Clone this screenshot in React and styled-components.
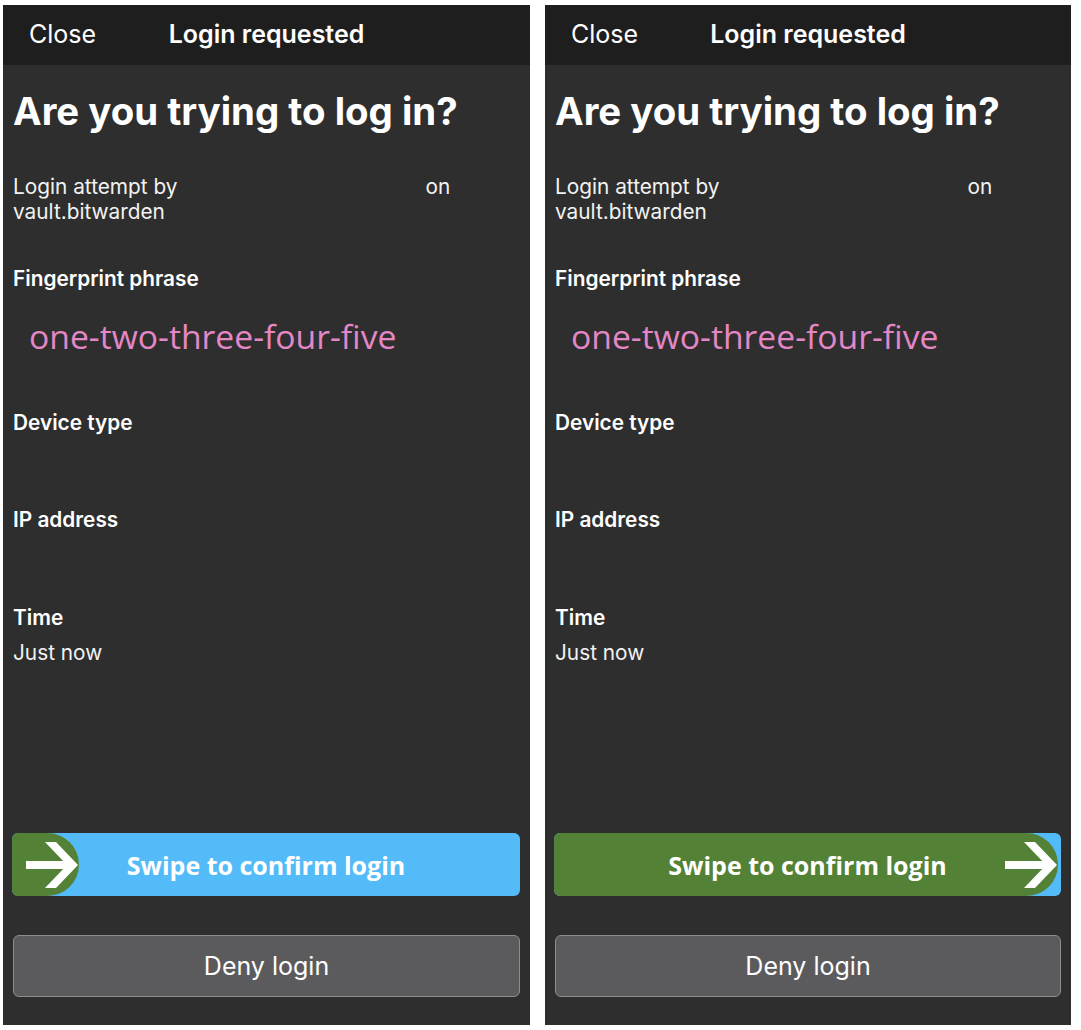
import React from 'react';
import styled, { createGlobalStyle } from 'styled-components';

const GlobalStyle = createGlobalStyle`
    html, body {
        margin: 0;
        padding: 0;
        background: #ffffff;
    }
    body {
        font-family: Inter, "Liberation Sans", sans-serif;
        -webkit-font-smoothing: antialiased;
    }
`;

const colorSet = {
    header: '#1e1e1e',
    body: '#2e2e2e',
    white: '#ffffff',
    text: '#f2f2f2',
    pink: '#e487c6',
    blue: '#54bbf9',
    green: '#538135',
    deny: '#5b5b5d',
    denyBorder: '#8d8d8f',
};

const Page = styled.div`
    display: flex;
    gap: 15px;
    padding: 5px 0 0 3px;
`;

const Phone = styled.div`
    display: flex;
    flex-direction: column;
    width: ${(p) => p.$width}px;
    height: 1020px;
    background-color: ${colorSet.body};
    color: ${colorSet.text};
`;

const Header = styled.div`
    display: grid;
    grid-template-columns: 1fr auto 1fr;
    align-items: center;
    height: 60px;
    padding: 0 26px 3px;
    box-sizing: border-box;
    background-color: ${colorSet.header};
    font-size: 25px;
`;

const CloseLink = styled.div`
    font-weight: 400;
    color: ${colorSet.white};
`;

const HeaderTitle = styled.div`
    font-weight: 600;
    color: ${colorSet.white};
`;

const Body = styled.div`
    flex: 1;
    display: flex;
    flex-direction: column;
    padding: 0 10px 28px;
`;

const Title = styled.h1`
    margin: 23px 0 0;
    font-size: 38.4px;
    line-height: 46px;
    font-weight: 700;
    color: ${colorSet.white};
`;

const Attempt = styled.div`
    margin-top: 40px;
    font-size: 20.8px;
    line-height: 25px;
`;

const Redacted = styled.span`
    display: inline-block;
    width: 248px;
`;

const Field = styled.div`
    margin-top: ${(p) => p.$top}px;
    display: flex;
    flex-direction: column;
    gap: 10px;
`;

const Label = styled.div`
    font-size: 20.8px;
    line-height: 25px;
    font-weight: 600;
    color: ${colorSet.white};
`;

const Value = styled.div`
    font-size: 20.8px;
    line-height: 25px;
    min-height: 25px;
`;

const Phrase = styled.div`
    margin-top: 25px;
    padding-left: 16px;
    font-family: "Open Sans", "Noto Sans", sans-serif;
    font-size: 33.7px;
    line-height: 40px;
    color: ${colorSet.pink};
`;

const Actions = styled.div`
    margin-top: auto;
    display: flex;
    flex-direction: column;
    gap: 39px;
`;

const SwipeTrack = styled.div`
    position: relative;
    height: 63px;
    margin-left: -1px;
    border-radius: 6px;
    background-color: ${colorSet.blue};
    overflow: hidden;
    display: flex;
    align-items: center;
    justify-content: center;
`;

const Thumb = styled.div`
    position: absolute;
    left: 0;
    top: 0;
    bottom: 0;
    width: ${(p) => p.$width};
    display: flex;
    align-items: center;
    justify-content: flex-end;
    padding-right: 1px;
    box-sizing: border-box;
    border-radius: 5px 32px 32px 5px;
    background-color: ${colorSet.green};
`;

const SwipeLabel = styled.span`
    position: relative;
    font-family: "Open Sans", "Noto Sans", sans-serif;
    font-size: 25px;
    font-weight: 700;
    color: ${colorSet.white};
`;

const DenyButton = styled.button`
    height: 62px;
    border: 1.5px solid ${colorSet.denyBorder};
    border-radius: 6px;
    background-color: ${colorSet.deny};
    color: ${colorSet.white};
    font-family: Inter, "Liberation Sans", sans-serif;
    font-size: 25px;
    font-weight: 400;
`;

function Arrow() {
    return (
        <svg width="52" height="46" viewBox="0 0 52 46">
            <path d="M0 19 H42 V27 H0 Z" fill="#ffffff" />
            <path d="M19 0 H30 L52 23 L30 46 H19 L41 23 Z" fill="#ffffff" />
        </svg>
    );
}

function LoginRequest({ width, swiped }) {
    return (
        <Phone $width={width}>
            <Header>
                <CloseLink>Close</CloseLink>
                <HeaderTitle>Login requested</HeaderTitle>
                <span />
            </Header>
            <Body>
                <Title>Are you trying to log in?</Title>
                <Attempt>
                    Login attempt by<Redacted />on
                    <br />
                    vault.bitwarden
                </Attempt>
                <Field $top={42}>
                    <Label>Fingerprint phrase</Label>
                </Field>
                <Phrase>one-two-three-four-five</Phrase>
                <Field $top={54}>
                    <Label>Device type</Label>
                    <Value />
                </Field>
                <Field $top={37}>
                    <Label>IP address</Label>
                    <Value />
                </Field>
                <Field $top={38}>
                    <Label>Time</Label>
                    <Value>Just now</Value>
                </Field>
                <Actions>
                    <SwipeTrack>
                        <Thumb $width={swiped ? 'calc(100% - 3px)' : '67px'}>
                            <Arrow />
                        </Thumb>
                        <SwipeLabel>Swipe to confirm login</SwipeLabel>
                    </SwipeTrack>
                    <DenyButton>Deny login</DenyButton>
                </Actions>
            </Body>
        </Phone>
    );
}

export default function App() {
    return (
        <>
            <GlobalStyle />
            <Page>
                <LoginRequest width={527} />
                <LoginRequest width={526} swiped />
            </Page>
        </>
    );
}
